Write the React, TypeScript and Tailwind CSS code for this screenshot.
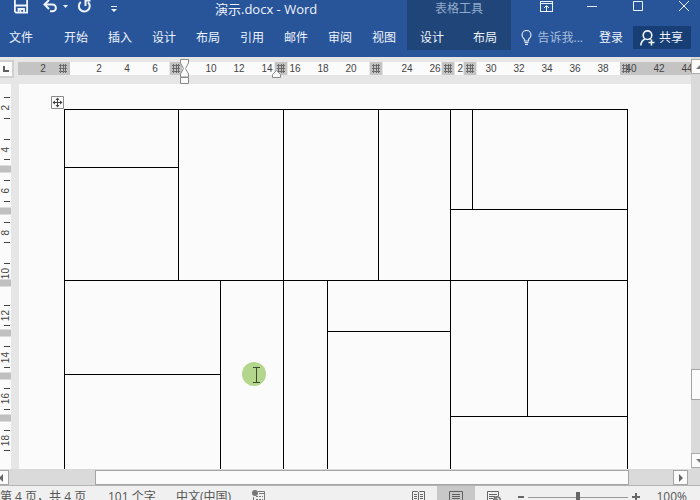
import { useState } from 'react';

const TABS = ['开始', '插入', '设计', '布局', '引用', '邮件', '审阅', '视图'];

// ruler labels, one every two characters; blanks sit under a column stop
const RULER = ['2', '', '2', '4', '6', '', '10', '12', '14', '16', '18', '20', '', '24', '26', '28', '30', '32', '34', '36', '38', '40', '42', '44'];
const COLUMN_STOPS = [151, 256, 351, 423, 445];
const V_RULER = ['2', '4', '6', '8', '10', '12', '14', '16', '18'];
const ROW_STOPS = [81, 123, 195, 245, 288, 330];

const COLS = [114, 42, 63, 44, 51, 72, 22, 55, 100];

type Cell = { c: number; r: number };
const ROWS: { h: number; cells: Cell[] }[] = [
  { h: 58, cells: [{ c: 1, r: 1 }, { c: 2, r: 3 }, { c: 2, r: 3 }, { c: 1, r: 3 }, { c: 1, r: 2 }, { c: 2, r: 2 }] },
  { h: 42, cells: [{ c: 1, r: 2 }] },
  { h: 71, cells: [{ c: 3, r: 1 }] },
  { h: 51, cells: [{ c: 2, r: 2 }, { c: 1, r: 4 }, { c: 1, r: 4 }, { c: 2, r: 1 }, { c: 2, r: 3 }, { c: 1, r: 3 }] },
  { h: 43, cells: [{ c: 2, r: 3 }] },
  { h: 42, cells: [{ c: 2, r: 2 }] },
  { h: 100, cells: [{ c: 3, r: 1 }] },
];

function GridMark() {
  return (
    <svg width="8" height="9" viewBox="0 0 8 9" stroke="#6a6a6a" shapeRendering="crispEdges">
      <path d="M1.5 0v9M4.5 0v9M6.5 0v9M0 1.5h8M0 4.5h8M0 7.5h8" />
    </svg>
  );
}

function Header() {
  return (
    <header className="grid h-[57px] shrink-0 grid-cols-[407px_104px_1fr] overflow-hidden bg-[#28559a] text-[12px] leading-4 text-[#eef3fa]">
      <div className="flex flex-col">
        <div className="flex h-[18px] shrink-0 items-center pl-[14px]">
          <button aria-label="保存" className="w-[14px]">
            <svg className="overflow-visible" width="14" height="16" viewBox="0 0 14 16" fill="none" stroke="#eef3fa" strokeWidth="1.8">
              <path d="M.9 -2v12.500l1.100 1.100h11.100V-2" />
              <path d="M1 4.500h12M4.500 11V8h5.500V11" />
              <path d="M6.500 9v2.500" strokeWidth="1.500" />
            </svg>
          </button>
          <button aria-label="撤销" className="ml-[15px] flex w-[25px] items-center">
            <svg className="overflow-visible" width="15" height="16" viewBox="0 0 15 16" fill="none" stroke="#eef3fa" strokeWidth="2">
              <path d="M6 -1L1.500 3.500 6 8M2 3.500h7.500a3.400 3.400 0 0 1 0 6.800H7" />
            </svg>
            <svg className="ml-[5px] -mt-[6px]" width="5" height="3" viewBox="0 0 5 3" fill="#eef3fa"><path d="M0 0h5L2.500 3z" /></svg>
          </button>
          <button aria-label="恢复" className="ml-[9px] w-[16px]">
            <svg className="overflow-visible" width="16" height="16" viewBox="0 0 16 16" fill="none" stroke="#eef3fa" strokeWidth="2">
              <path d="M3.800 1A5.400 5.400 0 1 0 11 1.200M8.500 5V-.5h5" />
            </svg>
          </button>
          <button aria-label="自定义快速访问工具栏" className="ml-[18px] w-[6px]">
            <svg width="6" height="7" viewBox="0 0 6 7" fill="#eef3fa"><path d="M0 0h6v1H0zM0 3h6L3 6z" /></svg>
          </button>
          <h1 className="ml-[98px] text-[13px] whitespace-nowrap">演示.docx - Word</h1>
        </div>
        <nav className="flex h-[39px] shrink-0 items-center pl-[9px]">
          <button className="mr-[21px]">文件</button>
          {TABS.map((t) => (
            <button key={t} className="w-[44px] text-center">{t}</button>
          ))}
        </nav>
      </div>
      <div className="flex h-[50px] flex-col bg-[#204579]">
        <div className="flex h-[18px] shrink-0 items-center justify-center text-[#92aacb]">表格工具</div>
        <nav className="flex h-[39px] shrink-0 items-center gap-[29px] pl-[13px]">
          <button>设计</button>
          <button>布局</button>
        </nav>
      </div>
      <div className="flex flex-col">
        <div className="flex h-[13px] shrink-0 items-center justify-end gap-[34px] pr-[11px]">
          <button aria-label="功能区显示选项">
            <svg width="13" height="11" viewBox="0 0 13 11" fill="none" stroke="#eef3fa" shapeRendering="crispEdges">
              <path d="M.5.500h12v10H.5zM1 2.500h11M6.500 10V5" />
              <path d="M4 7L6.500 4.500 9 7" shapeRendering="auto" />
            </svg>
          </button>
          <button aria-label="最小化">
            <svg width="10" height="11" stroke="#eef3fa"><path d="M0 5.500h10" /></svg>
          </button>
          <button aria-label="最大化" className="ml-[2px]">
            <svg width="10" height="11" fill="none" stroke="#eef3fa"><path d="M.5.500h9v9h-9z" /></svg>
          </button>
          <button aria-label="关闭" className="ml-[2px]">
            <svg width="10" height="11" stroke="#eef3fa"><path d="M0 0l10 10M10 0l-10 10" /></svg>
          </button>
        </div>
        <div className="mt-[5px] flex h-[39px] shrink-0 items-center justify-end pr-[9px]">
          <button className="flex items-center gap-[6px] text-[#a9bfdd]">
            <svg width="11" height="15" viewBox="0 0 11 15" fill="none" stroke="#dce6f3" strokeWidth="1.200">
              <path d="M3.500 11V9.500C2 8 1 6.800 1 5a4.500 4.500 0 0 1 9 0c0 1.800-1 3-2.500 4.500V11zM3.500 12.500h4M4 14.300h3" />
            </svg>
            <span>告诉我...</span>
          </button>
          <button className="ml-[16px]">登录</button>
          <button className="ml-[10px] flex h-[23px] w-[58px] items-center gap-[4px] bg-[#173f75] pl-[7px]">
            <svg width="15" height="16" viewBox="0 0 15 16" fill="none" stroke="#eef3fa" strokeWidth="1.600">
              <circle cx="7.500" cy="5.200" r="4.300" />
              <path d="M.8 15.500C1 12.500 3 10 5 9M9.500 8.500l1.200 1M11.500 9.500v6M8.500 12.500h6" />
            </svg>
            共享
          </button>
        </div>
      </div>
    </header>
  );
}

function Ruler() {
  return (
    <div className="flex h-[27px] shrink-0">
      <button aria-label="制表符" className="mt-[3px] flex h-[18px] w-[14px] items-center justify-center border-2 border-l-0 border-[#d0d0d0] bg-[#fbfbfb]">
        <svg width="6" height="6" stroke="#5f5f5f" strokeWidth="2"><path d="M1 0v5h5" fill="none" /></svg>
      </button>
      <div className="relative ml-[4px] mt-[5px] h-[13px] flex-1 bg-[#fbfbfb]">
        <div className="absolute inset-0 overflow-hidden">
          <div className="absolute inset-y-0 left-0 w-[52px] bg-[#c4c4c4]" />
          <div className="absolute inset-y-0 right-0 left-[602px] bg-[#c4c4c4]" />
          <div className="relative ml-[11px] flex font-['Liberation_Sans',sans-serif] text-[10px] leading-[14px] text-[#444]">
            {RULER.map((n, i) => (
              <span key={i} className="w-[28px] shrink-0 text-center">{n}</span>
            ))}
          </div>
          {COLUMN_STOPS.map((x) => (
            <div key={x} className="absolute inset-y-0 flex w-[14px] items-center justify-center border-x border-[#e6e6e6] bg-[#c4c4c4]" style={{ left: x }}>
              <GridMark />
            </div>
          ))}
          <div className="absolute top-[2px] left-[41px]"><GridMark /></div>
          <div className="absolute top-[2px] left-[604px]"><GridMark /></div>
        </div>
        {/* indent markers */}
        <svg className="absolute -top-[3px] left-[162px]" width="9" height="25" viewBox="0 0 9 25" fill="#fbfbfb" stroke="#8a8a8a">
          <path d="M.5.500h8V4l-3 5.500 3 5.500v3h-8v-3l3-5.500L.5 4zM.5 18.500h8v6h-8z" />
        </svg>
        <svg className="absolute top-[8px] left-[254px]" width="9" height="8" viewBox="0 0 9 8" fill="#fbfbfb" stroke="#8a8a8a">
          <path d="M.5 7.500v-3l4-4 4 4v3z" />
        </svg>
      </div>
    </div>
  );
}

function VerticalRuler() {
  return (
    <div className="relative mr-[8px] flex w-[11px] shrink-0 flex-col bg-[#fbfbfb] pt-[3px] pb-[8px]">
      {V_RULER.map((n) => (
        <div key={n} className="flex flex-1 flex-col items-center justify-between py-[10px]">
          <i className="ml-[2px] h-px w-[6px] bg-[#444]" />
          <span className="w-[12px] rotate-180 font-['Liberation_Sans',sans-serif] text-[10px] leading-[12px] text-[#444] [writing-mode:vertical-rl]">{n}</span>
          <i className="ml-[2px] h-px w-[6px] bg-[#444]" />
        </div>
      ))}
      {ROW_STOPS.map((y) => (
        <div key={y} className="absolute inset-x-0 h-[8px] border-y border-[#dcdcdc] bg-[#c0c0c0]" style={{ top: y }} />
      ))}
    </div>
  );
}

function Page() {
  return (
    <main className="relative flex-1 overflow-hidden bg-[#fbfbfb] pt-[25px] pl-[45px]">
      <table className="w-[564px] table-fixed border-collapse">
        <colgroup>
          {COLS.map((w, i) => (
            <col key={i} style={{ width: w }} />
          ))}
        </colgroup>
        <tbody>
          {ROWS.map((row, i) => (
            <tr key={i} style={{ height: row.h }}>
              {row.cells.map((cell, j) => (
                <td key={j} colSpan={cell.c} rowSpan={cell.r} className="border border-black p-0" />
              ))}
            </tr>
          ))}
        </tbody>
      </table>
      <svg className="absolute top-[12px] left-[32px]" width="13" height="13" viewBox="0 0 13 13" fill="#fbfbfb" stroke="#8a8a8a">
        <path d="M.5.500h12v12H.5z" />
        <path d="M6.500 3v7M3 6.500h7" stroke="#444" />
        <path d="M6.500 1.500L8.500 4h-4zM6.500 11.500L8.500 9h-4zM1.500 6.500L4 4.500v4zM11.500 6.500L9 4.500v4z" fill="#444" stroke="none" />
      </svg>
      <svg className="absolute top-[278px] left-[223px]" width="24" height="24" viewBox="0 0 24 24">
        <circle cx="12" cy="12" r="12" fill="#b3d68c" />
        <path d="M11 5.500h7M14.500 5.500v15M11 20.500h7" fill="none" stroke="#3c4a30" />
      </svg>
    </main>
  );
}

function VerticalScroll() {
  return (
    <div className="w-[9px] shrink-0 overflow-hidden bg-[#dadada] pt-[2px] pb-px">
      <div className="flex h-full w-[17px] flex-col">
        <button aria-label="向上滚动" className="flex h-[15px] items-center justify-center border border-[#ababab] bg-[#fbfbfb]">
          <svg width="8" height="4" fill="#777"><path d="M0 4h8L4 0z" /></svg>
        </button>
        <div className="grow-[295]" />
        <div className="h-[31px] border border-[#a5a5a5] bg-[#fbfbfb]" />
        <div className="grow-[53]" />
        <button aria-label="向下滚动" className="flex h-[15px] items-center justify-center border border-[#ababab] bg-[#fbfbfb]">
          <svg width="8" height="4" fill="#777"><path d="M0 0h8L4 4z" /></svg>
        </button>
      </div>
    </div>
  );
}

function HorizontalScroll() {
  return (
    <div className="flex h-[16px] shrink-0 bg-[#dadada] pt-px pr-[12px]">
      <button aria-label="向左滚动" className="flex w-[9px] items-center border border-l-0 border-[#a5a5a5] bg-[#fbfbfb]">
        <svg width="4" height="8" fill="#666"><path d="M3 0v8L-1 4z" /></svg>
      </button>
      <div className="grow-[86]" />
      <div className="grow-[534] border border-[#a5a5a5] bg-[#fbfbfb]" />
      <div className="grow-[44]" />
      <button aria-label="向右滚动" className="flex w-[15px] items-center justify-center border border-[#a5a5a5] bg-[#fbfbfb]">
        <svg width="4" height="8" fill="#666"><path d="M0 0v8l4-4z" /></svg>
      </button>
    </div>
  );
}

function StatusBar() {
  const [zoom, setZoom] = useState(50);

  return (
    <footer className="h-[15px] shrink-0 overflow-hidden border-t border-[#b4b4b4] bg-[#f0f0f0] text-[12px] text-[#555]">
      <div className="flex h-[22px] items-center pr-[13px] whitespace-nowrap">
        <span className="w-[108px]">第 4 页，共 4 页</span>
        <span className="w-[68px]">101 个字</span>
        <span className="w-[76px]">中文(中国)</span>
        <button aria-label="宏录制">
          <svg width="13" height="14" viewBox="0 0 13 14" fill="none" stroke="#777">
            <path d="M6 1.500h6.500v12h-11V7M4 6.500h2M7 6.500h2M10 6.500h1M4 9.500h2M7 9.500h2M10 9.500h1M7 3.500h5" />
            <circle cx="3" cy="3" r="3" fill="#777" stroke="none" />
          </svg>
        </button>
        <div className="ml-auto flex h-full items-center">
          <button aria-label="阅读视图" className="flex w-[38px] justify-center">
            <svg width="13" height="13" viewBox="0 0 13 13" fill="none" stroke="#666">
              <path d="M.5.500h5l1 1 1-1h5v11h-5l-1 1-1-1h-5zM6.500 1v11M2 3.500h3M2 5.500h3M2 7.500h3M2 9.500h3M8 3.500h3M8 5.500h3M8 7.500h3M8 9.500h3" />
            </svg>
          </button>
          <button aria-label="页面视图" className="flex h-full w-[38px] items-center justify-center bg-[#c8c8c8]">
            <svg width="14" height="13" viewBox="0 0 14 13" fill="none" stroke="#606060">
              <path d="M.5.500h13v12H.5zM3 3.500h8M3 5.500h8M3 7.500h8M3 9.500h8" />
            </svg>
          </button>
          <button aria-label="Web 版式视图" className="flex w-[38px] justify-center">
            <svg width="14" height="13" viewBox="0 0 14 13" fill="none" stroke="#666">
              <path d="M6 12.500H.5V.500h11V5M2 3.500h8M2 5.500h6M2 7.500h4M2 9.500h3" />
              <circle cx="10" cy="9" r="3.500" fill="#888" />
              <path d="M10 7l2 1-1 2" stroke="#f0f0f0" />
            </svg>
          </button>
          <button aria-label="缩小" className="ml-[5px] h-[2px] w-[6px] bg-[#666]" />
          <input
            type="range"
            aria-label="显示比例"
            value={zoom}
            onChange={(e) => setZoom(Number(e.target.value))}
            className="mx-[4px] h-[10px] w-[100px] appearance-none bg-transparent [&::-webkit-slider-runnable-track]:h-px [&::-webkit-slider-runnable-track]:bg-[#999] [&::-webkit-slider-thumb]:-mt-[5px] [&::-webkit-slider-thumb]:h-[11px] [&::-webkit-slider-thumb]:w-[4px] [&::-webkit-slider-thumb]:appearance-none [&::-webkit-slider-thumb]:bg-[#666]"
          />
          <button aria-label="放大">
            <svg width="8" height="8" stroke="#666" strokeWidth="2"><path d="M0 4h8M4 0v8" /></svg>
          </button>
          <span className="ml-[16px]">100%</span>
        </div>
      </div>
    </footer>
  );
}

export default function App() {
  return (
    <div className="flex h-screen flex-col overflow-hidden bg-[#e6e6e6] font-['Open_Sans','Noto_Sans_CJK_SC',sans-serif]">
      <Header />
      <div className="flex min-h-0 flex-1">
        <div className="flex min-w-0 flex-1 flex-col">
          <Ruler />
          <div className="flex min-h-0 flex-1">
            <VerticalRuler />
            <Page />
          </div>
        </div>
        <VerticalScroll />
      </div>
      <HorizontalScroll />
      <StatusBar />
    </div>
  );
}
